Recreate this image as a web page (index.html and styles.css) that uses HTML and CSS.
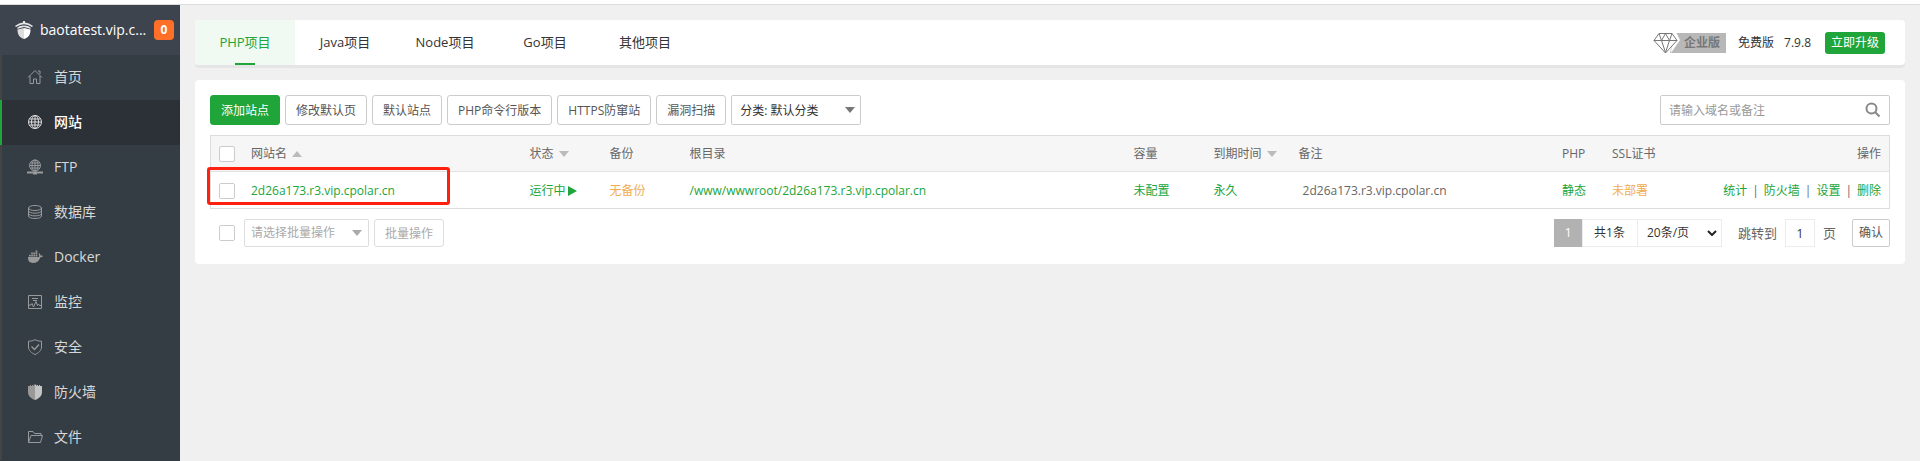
FILE: index.html
```html
<!DOCTYPE html>
<html lang="zh-CN">
<head>
<meta charset="utf-8">
<title>网站</title>
<link rel="stylesheet" href="styles.css">
</head>
<body>
<div class="app">
  <aside class="sidebar">
    <header class="brand">
      <svg class="brand-icon" viewBox="0 0 18 18"><path d="M8 0h2v1.500l4 1 4 2.500-1 1-4-2-4-.8-4 .8-4 2L0 5l4-2.500 4-1z" fill="#e6e6e6"/><path d="M2 7l3-2 4-.6L13 5l3 2-.6.700L9 6l-6.400 1.700z" fill="#e6e6e6"/><path d="M2.500 8.500L9 7v11c-4-1-6.500-4-6.500-9.500z" fill="#ddd"/><path d="M9 7l6.500 1.500C15.500 14 13 17 9 18z" fill="#fff"/></svg>
      <span class="brand-name">baotatest.vip.c...</span>
      <span class="brand-badge">0</span>
    </header>
    <nav class="menu">
      <a class="menu-item" href="#"><svg viewBox="0 0 16 16"><path d="M1 8.500l7-7 7 7M3 7v7.500h3.500V10h3v4.500H13V7M11 2h2v3"/></svg>首页</a>
      <a class="menu-item active" href="#"><svg viewBox="0 0 16 16"><circle cx="8" cy="8" r="6.500"/><ellipse cx="8" cy="8" rx="3.500" ry="6.500"/><path d="M8 1.500v13M1.500 8h13M2.500 5h11M2.500 11h11"/></svg>网站</a>
      <a class="menu-item" href="#"><svg viewBox="0 0 16 16"><circle cx="8" cy="6.500" r="5.500"/><ellipse cx="8" cy="6.500" rx="3" ry="5.500"/><path d="M8 1v12M2.500 6.500h11M3.500 4h9M3.500 9h9"/><path d="M0 13.500h16M6 14.500h4" stroke-width="2"/></svg>FTP</a>
      <a class="menu-item" href="#"><svg viewBox="0 0 16 16"><ellipse cx="8" cy="4" rx="6.500" ry="2.500"/><path d="M1.500 4v8c0 3.300 13 3.300 13 0V4M1.500 6.700c0 3.300 13 3.300 13 0M1.500 9.400c0 3.300 13 3.300 13 0"/></svg>数据库</a>
      <a class="menu-item" href="#"><svg viewBox="0 0 16 16"><path class="solid" d="M1 8h11c.4-1 .2-2-.4-3l.7-.7c.9.700 1.200 1.500 1.200 2.300.8-.2 1.700-.1 2.500.400-.6 1-1.600 1.400-2.800 1.400C12 12 9.500 14 6 14 2.500 14 .7 12 1 8zM2 5.700h1.700v1.800H2zM4.200 5.700h1.700v1.800H4.200zM6.400 5.700h1.700v1.800H6.400zM8.600 5.700h1.700v1.800H8.600zM4.200 3.600h1.700v1.700H4.200zM6.400 3.600h1.700v1.700H6.400zM8.600 3.600h1.700v1.700H8.600zM8.600 1.500h1.700v1.700H8.600z"/></svg>Docker</a>
      <a class="menu-item" href="#"><svg viewBox="0 0 16 16"><path d="M1.500 1.500h13v13h-13zM5 4.500h6M6 6.500h4M2 11h2l1-1.500L6.500 13 9 7.500l1.500 4 1-1.500 1 1.500H14"/></svg>监控</a>
      <a class="menu-item" href="#"><svg viewBox="0 0 16 16"><path d="M8 .700c2 1 4 1.500 6.500 1.500V8c0 3.500-3 6-6.500 7.500C4.500 14 1.500 11.500 1.500 8V2.200C4 2.200 6 1.700 8 .700z"/><path d="M4.500 7.500l3 3L12 5.500" stroke-width="1.400"/></svg>安全</a>
      <a class="menu-item" href="#"><svg viewBox="0 0 16 16"><path class="solid" d="M8 0v16C4 14.500 1 12 1 8V2h2V1h1v1h1V1h1v1l1-1z"/><path class="light" d="M8 0l1 1 1 1V1h1v1h1V1h1v1h2v6c0 4-3 6.500-7 8z"/></svg>防火墙</a>
      <a class="menu-item" href="#"><svg viewBox="0 0 16 16"><path d="M1.500 13.500v-11h4.500l1.500 2h6.500v2M1.500 13.500L4 6.500h11.500l-2 7z"/></svg>文件</a>
    </nav>
  </aside>

  <main class="content">
    <section class="tabs-card">
      <nav class="tabs">
        <a class="tab active" href="#">PHP项目</a>
        <a class="tab" href="#">Java项目</a>
        <a class="tab" href="#">Node项目</a>
        <a class="tab" href="#">Go项目</a>
        <a class="tab" href="#">其他项目</a>
      </nav>
      <div class="edition">
        <span class="edition-tag">
          <svg viewBox="0 0 27 22"><path class="edge" d="M22 1h5v20H17z"/><path class="gap" d="M20 0h3l4 8-9 13z"/><path class="gem" d="M6 1.500h13l5 7L12.500 21 1 8.500zM1 8.500h23M6 1.500l2.500 7 4 12 4-12 2.500-7M8.500 8.500l4-7 4 7"/></svg><span class="edition-label">企业版</span>
        </span>
        <span class="edition-free">免费版</span>
        <span class="edition-version">7.9.8</span>
        <button class="upgrade" type="button">立即升级</button>
      </div>
    </section>

    <section class="sites-card">
      <div class="toolbar">
        <button class="btn btn-primary" type="button">添加站点</button>
        <button class="btn" type="button">修改默认页</button>
        <button class="btn" type="button">默认站点</button>
        <button class="btn" type="button">PHP命令行版本</button>
        <button class="btn" type="button">HTTPS防窜站</button>
        <button class="btn" type="button">漏洞扫描</button>
        <span class="picker picker-class">
          <select aria-label="分类"><option>分类: 默认分类</option></select>
        </span>
        <form class="search">
          <input type="text" placeholder="请输入域名或备注" aria-label="搜索">
          <button type="button" aria-label="搜索"><svg viewBox="0 0 16 16"><circle cx="6.500" cy="6.500" r="5"/><path d="M10 10l4.500 4.500"/></svg></button>
        </form>
      </div>

      <div class="table-wrap">
        <table class="sites">
          <colgroup><col class="c-check"><col class="c-name"><col class="c-mid"><col class="c-mid"><col><col class="c-mid"><col class="c-expire"><col class="c-note"><col class="c-php"><col class="c-ssl"><col class="c-ops"></colgroup>
          <thead>
            <tr>
              <th><input type="checkbox" aria-label="全选"></th>
              <th>网站名<i class="sort sort-up"></i></th>
              <th>状态<i class="sort"></i></th>
              <th>备份</th>
              <th>根目录</th>
              <th>容量</th>
              <th>到期时间<i class="sort"></i></th>
              <th>备注</th>
              <th>PHP</th>
              <th>SSL证书</th>
              <th class="ops">操作</th>
            </tr>
          </thead>
          <tbody>
            <tr>
              <td><input type="checkbox" aria-label="选择站点"></td>
              <td><a href="#">2d26a173.r3.vip.cpolar.cn</a></td>
              <td><a class="running" href="#">运行中<i class="play"></i></a></td>
              <td><a class="warn" href="#">无备份</a></td>
              <td><a href="#">/www/wwwroot/2d26a173.r3.vip.cpolar.cn</a></td>
              <td><a href="#">未配置</a></td>
              <td><a href="#">永久</a></td>
              <td><span class="note">2d26a173.r3.vip.cpolar.cn</span></td>
              <td><a href="#">静态</a></td>
              <td><a class="warn" href="#">未部署</a></td>
              <td><div class="actions"><a href="#">统计</a><span>|</span><a href="#">防火墙</a><span>|</span><a href="#">设置</a><span>|</span><a href="#">删除</a></div></td>
            </tr>
          </tbody>
        </table>
        <div class="highlight"></div>
      </div>

      <footer class="table-foot">
        <input type="checkbox" aria-label="全选批量操作">
        <span class="picker picker-batch"><select aria-label="批量操作"><option>请选择批量操作</option></select></span>
        <button class="btn btn-batch" type="button">批量操作</button>
        <div class="pager">
          <span class="page-current">1</span>
          <span class="page-total">共1条</span>
          <span class="page-size"><select aria-label="每页条数"><option>20条/页</option></select><svg viewBox="0 0 10 6"><path d="M1 1l4 4 4-4"/></svg></span>
          <label class="page-jump" for="jump">跳转到</label>
          <input class="page-input" id="jump" type="text" value="1">
          <span class="page-unit">页</span>
          <button class="page-ok" type="button">确认</button>
        </div>
      </footer>
    </section>
  </main>
</div>
</body>
</html>
```
FILE: styles.css
```css
* { box-sizing: border-box; }

body {
  margin: 0;
  background: #f0f0f0;
  color: #666;
  font: 12px/18px "Open Sans", "Noto Sans CJK SC", sans-serif;
}

a { color: #20a53a; text-decoration: none; }
button, input, select { font: inherit; color: inherit; margin: 0; }
i { font-style: normal; }

.app {
  display: flex;
  min-height: 100vh;
  border-top: 4px solid #fff;
  box-shadow: inset 0 1px #dcdce0;
  padding-top: 1px;
}

/* Sidebar */
.sidebar { flex: 0 0 180px; min-width: 0; background: #353d44; }
.brand {
  display: flex;
  align-items: center;
  justify-content: space-between;
  height: 50px;
  padding: 0 6px 0 15px;
  background: #3d444e;
  color: #fff;
  font-size: 14px;
}
.brand-icon { flex: none; width: 18px; height: 18px; margin-right: 7px; }
.brand-name { flex: 1; line-height: 24px; white-space: nowrap; }
.brand-badge {
  flex: none;
  width: 20px;
  border-radius: 4px;
  background: #ff6f28;
  font-size: 12px;
  font-weight: 700;
  line-height: 20px;
  text-align: center;
}
.menu-item {
  display: flex;
  align-items: center;
  gap: 11px;
  height: 45px;
  padding: 0 0 2px 25px;
  border-left: 2px solid #444;
  color: #d8d8d8;
  font-size: 14px;
}
.menu-item svg { width: 16px; height: 16px; fill: none; stroke: #989a9c; }
.menu-item .solid { fill: #999; stroke: none; }
.menu-item .light { fill: #c4c4c4; stroke: none; }
.menu-item.active { border-color: #20a53a; background: #2c3138; color: #fff; font-weight: 500; }
.menu-item.active svg { stroke: #ddd; }

/* Content */
.content { flex: 1; min-width: 0; padding: 15px; }
.tabs-card {
  display: flex;
  justify-content: space-between;
  margin-bottom: 15px;
  border-radius: 4px;
  background: #fff;
  box-shadow: 0 3px #e5e5e5;
}
.tabs { display: flex; }
.tab {
  position: relative;
  width: 100px;
  color: #333;
  font-size: 13px;
  line-height: 45px;
  text-align: center;
}
.tab.active { border-radius: 4px 0 0 4px; background: #f0f9f2; color: #20a53a; }
.tab.active::after {
  content: "";
  position: absolute;
  bottom: 0;
  left: 40px;
  width: 20px;
  height: 2px;
  background: #20a53a;
}
.edition { display: flex; align-items: center; padding-right: 20px; color: #333; }
.edition-tag { display: flex; margin-right: 12px; }
.edition-tag svg { width: 27px; height: 22px; }
.edition-tag .edge { fill: #b8b8b8; }
.edition-tag .gap { fill: #fff; }
.edition-tag .gem { fill: #fff; stroke: #777; }
.edition-label {
  height: 20px;
  margin-top: 1px;
  padding: 0 6px 0 4px;
  background: #b8b8b8;
  color: #777;
  font-weight: 700;
  line-height: 20px;
}
.edition-free { margin-right: 10px; }
.edition-version { margin-right: 14px; }
.upgrade {
  width: 60px;
  height: 22px;
  padding: 0;
  border: 0;
  border-radius: 3px;
  background: #20a53a;
  color: #fff;
}

.sites-card { padding: 15px 15px 17px; border-radius: 4px; background: #fff; }
.toolbar { display: flex; gap: 5px; margin-bottom: 10px; }
.btn {
  height: 30px;
  padding: 2px 10px 0;
  border: 1px solid #ccc;
  border-radius: 3px;
  background: #fff;
  color: #555;
  white-space: nowrap;
}
.btn-primary { border-color: #20a53a; background: #20a53a; color: #fff; }

.picker { position: relative; display: flex; }
.picker select {
  width: 100%;
  border: 1px solid #ccc;
  border-radius: 2px;
  background: #fff;
  appearance: none;
}
.picker::after {
  content: "";
  position: absolute;
  top: 50%;
  width: 0;
  margin-top: -3px;
  border: 5px solid transparent;
  border-top: 6px solid;
  border-bottom: 0;
}
.picker-class { width: 130px; color: #333; }
.picker-class select { padding: 2px 8px 0; }
.picker-class::after { right: 6px; border-top-color: #777; }
.picker-batch { width: 125px; height: 28px; margin-left: 4px; color: #aaa; }
.picker-batch select { padding: 0 6px; border-color: #ddd; }
.picker-batch::after { right: 7px; border-top-color: #aaa; }

.search {
  display: flex;
  align-items: center;
  width: 230px;
  height: 30px;
  margin-left: auto;
  padding: 0 8px;
  border: 1px solid #ccc;
  border-radius: 2px;
}
.search input { flex: 1; min-width: 0; padding: 2px 0 0; border: 0; outline: 0; }
.search input::placeholder { color: #999; }
.search button { display: flex; padding: 0; border: 0; background: none; }
.search svg { width: 16px; height: 16px; fill: none; stroke: #888; stroke-width: 2; }

/* Sites table */
.table-wrap { position: relative; border: 1px solid #ddd; }
.sites { width: 100%; border-collapse: collapse; table-layout: fixed; }
.sites th, .sites td { padding: 2px 8px 0; font-weight: 400; text-align: left; white-space: nowrap; }
.sites th { height: 35px; border-bottom: 1px solid #e2e2e2; background: #f6f6f6; }
.sites td { height: 37px; }
.sites .ops { text-align: right; }
.c-check { width: 32px; }
.c-name { width: 16.600%; }
.c-mid { width: 80px; }
.c-expire { width: 85px; }
.c-note { width: 15.700%; }
.c-php { width: 50px; }
.c-ssl { width: 100px; }
.c-ops { width: 185px; }

input[type="checkbox"] {
  display: block;
  flex: none;
  width: 16px;
  height: 16px;
  border: 1px solid #ccc;
  border-radius: 2px;
  background: #fff;
  appearance: none;
}
.sort {
  display: inline-block;
  margin-left: 5px;
  border: 5px solid transparent;
  border-top: 6px solid #bbb;
  border-bottom: 0;
  vertical-align: 1px;
}
.sort-up { border-top: 0; border-bottom: 6px solid #bbb; }
.running { display: flex; align-items: center; gap: 2px; }
.play { border: 5px solid transparent; border-left: 9px solid #20a53a; border-right: 0; }
.warn { color: #f0ad4e; }
.note { padding-left: 4px; }
.actions { display: flex; justify-content: flex-end; gap: 5px; }
.highlight {
  position: absolute;
  top: 31px;
  left: -4px;
  width: 243px;
  height: 38px;
  border: 3px solid #ff2010;
  border-radius: 3px;
}

/* Table footer */
.table-foot { display: flex; align-items: center; gap: 5px; margin-top: 10px; padding-left: 9px; }
.btn-batch { height: 28px; border-color: #ddd; color: #aaa; }
.pager { display: flex; align-items: center; height: 28px; margin-left: auto; color: #333; line-height: 26px; }
.page-current { width: 28px; background: #b2b2b2; color: #fff; line-height: 28px; text-align: center; }
.page-total { padding: 0 12px 0 11px; border: 1px solid #ececec; }
.page-size { position: relative; display: flex; width: 85px; height: 28px; margin-left: -1px; }
.page-size select {
  width: 100%;
  padding: 0 9px;
  border: 1px solid #ececec;
  border-radius: 0;
  background: #fff;
  appearance: none;
}
.page-size svg { position: absolute; top: 11px; right: 5px; width: 10px; height: 6px; fill: none; stroke: #222; stroke-width: 2; }
.page-jump { margin: 0 8px 0 16px; color: #666; font-size: 13px; }
.page-input { width: 30px; height: 28px; padding: 0; border: 1px solid #ececec; text-align: center; }
.page-unit { margin: 0 16px 0 8px; color: #666; font-size: 13px; }
.page-ok { width: 38px; height: 28px; padding: 0; border: 1px solid #ccc; border-radius: 2px; background: #fff; color: #555; }
```
